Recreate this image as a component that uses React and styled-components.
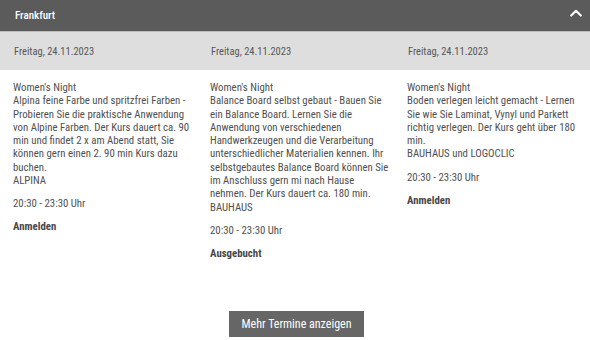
import React from 'react';
import styled, { createGlobalStyle } from 'styled-components';

const Global = createGlobalStyle`
  body {
    margin: 0;
    background: #fff;
    font-family: Roboto, "Liberation Sans", sans-serif;
    font-stretch: condensed;
    color: #505050;
  }
`;

const courses = [
  {
    date: 'Freitag, 24.11.2023',
    lines: [
      'Alpina feine Farbe und spritzfrei Farben -',
      'Probieren Sie die praktische Anwendung',
      'von Alpine Farben. Der Kurs dauert ca. 90',
      'min und findet 2 x am Abend statt, Sie',
      'können gern einen 2. 90 min Kurs dazu',
      'buchen.',
    ],
    brand: 'ALPINA',
    action: 'Anmelden',
  },
  {
    date: 'Freitag, 24.11.2023',
    lines: [
      'Balance Board selbst gebaut - Bauen Sie',
      'ein Balance Board. Lernen Sie die',
      'Anwendung von verschiedenen',
      'Handwerkzeugen und die Verarbeitung',
      'unterschiedlicher Materialien kennen. Ihr',
      'selbstgebautes Balance Board können Sie',
      'im Anschluss gern mi nach Hause',
      'nehmen. Der Kurs dauert ca. 180 min.',
    ],
    brand: 'BAUHAUS',
    action: 'Ausgebucht',
  },
  {
    date: 'Freitag, 24.11.2023',
    lines: [
      'Boden verlegen leicht gemacht - Lernen',
      'Sie wie Sie Laminat, Vynyl und Parkett',
      'richtig verlegen. Der Kurs geht über 180',
      'min.',
    ],
    brand: 'BAUHAUS und LOGOCLIC',
    action: 'Anmelden',
  },
];

function ChevronUp() {
  return (
    <svg width="12" height="8" viewBox="0 0 12 8">
      <polyline
        points="1.2,6.5 6,1.8 10.8,6.5"
        fill="none"
        stroke="#fff"
        strokeWidth="2.2"
        strokeLinecap="round"
        strokeLinejoin="round"
      />
    </svg>
  );
}

export default function App() {
  return (
    <>
      <Global />
      <Panel>
        <Header>
          <City>Frankfurt</City>
          <Toggle>
            <ChevronUp />
          </Toggle>
        </Header>
        <DateRow>
          {courses.map((c, i) => (
            <DateCell key={i}>{c.date}</DateCell>
          ))}
        </DateRow>
        <Columns>
          {courses.map((c, i) => (
            <Course key={i}>
              <Text>
                Women&apos;s Night
                {c.lines.map((l, j) => (
                  <Line key={j}>{l}</Line>
                ))}
                <Line>{c.brand}</Line>
              </Text>
              <Time>20:30 - 23:30 Uhr</Time>
              <Action>{c.action}</Action>
            </Course>
          ))}
        </Columns>
        <Footer>
          <MoreButton>Mehr Termine anzeigen</MoreButton>
        </Footer>
      </Panel>
    </>
  );
}

const Panel = styled.div`
  width: 590px;
  height: 340px;
  overflow: hidden;
`;

const Header = styled.div`
  display: flex;
  align-items: center;
  justify-content: space-between;
  height: 31px;
  padding: 0 8px 0 15px;
  background-color: #5b5b5b;
  border-bottom: 1px solid #bdbdbd;
`;

const City = styled.div`
  font-size: 11px;
  font-weight: 500;
  color: #fff;
`;

const Toggle = styled.span`
  display: flex;
  align-items: center;
  margin-top: -6px;
`;

const DateRow = styled.div`
  display: grid;
  grid-template-columns: repeat(3, 197px);
  align-items: center;
  height: 38px;
  background-color: #dedede;
`;

const DateCell = styled.div`
  padding-left: 14px;
  font-size: 10.5px;
  color: #575757;
`;

const Columns = styled.div`
  display: grid;
  grid-template-columns: repeat(3, 197px);
  padding-top: 11px;
`;

const Course = styled.div`
  padding-left: 13px;
  font-size: 10.8px;
  line-height: 13.3px;
`;

const Text = styled.div`
  white-space: nowrap;
`;

const Line = styled.div``;

const Time = styled.div`
  margin-top: 10px;
`;

const Action = styled.div`
  margin-top: 9.5px;
  font-weight: 700;
  color: #474747;
`;

const Footer = styled.div`
  display: flex;
  justify-content: center;
  padding-top: 51px;
`;

const MoreButton = styled.button`
  width: 135px;
  height: 26px;
  margin-left: 3px;
  border: none;
  background-color: #666;
  color: #fff;
  font-family: inherit;
  font-stretch: condensed;
  font-size: 12px;
  font-weight: 400;
  cursor: pointer;
`;
